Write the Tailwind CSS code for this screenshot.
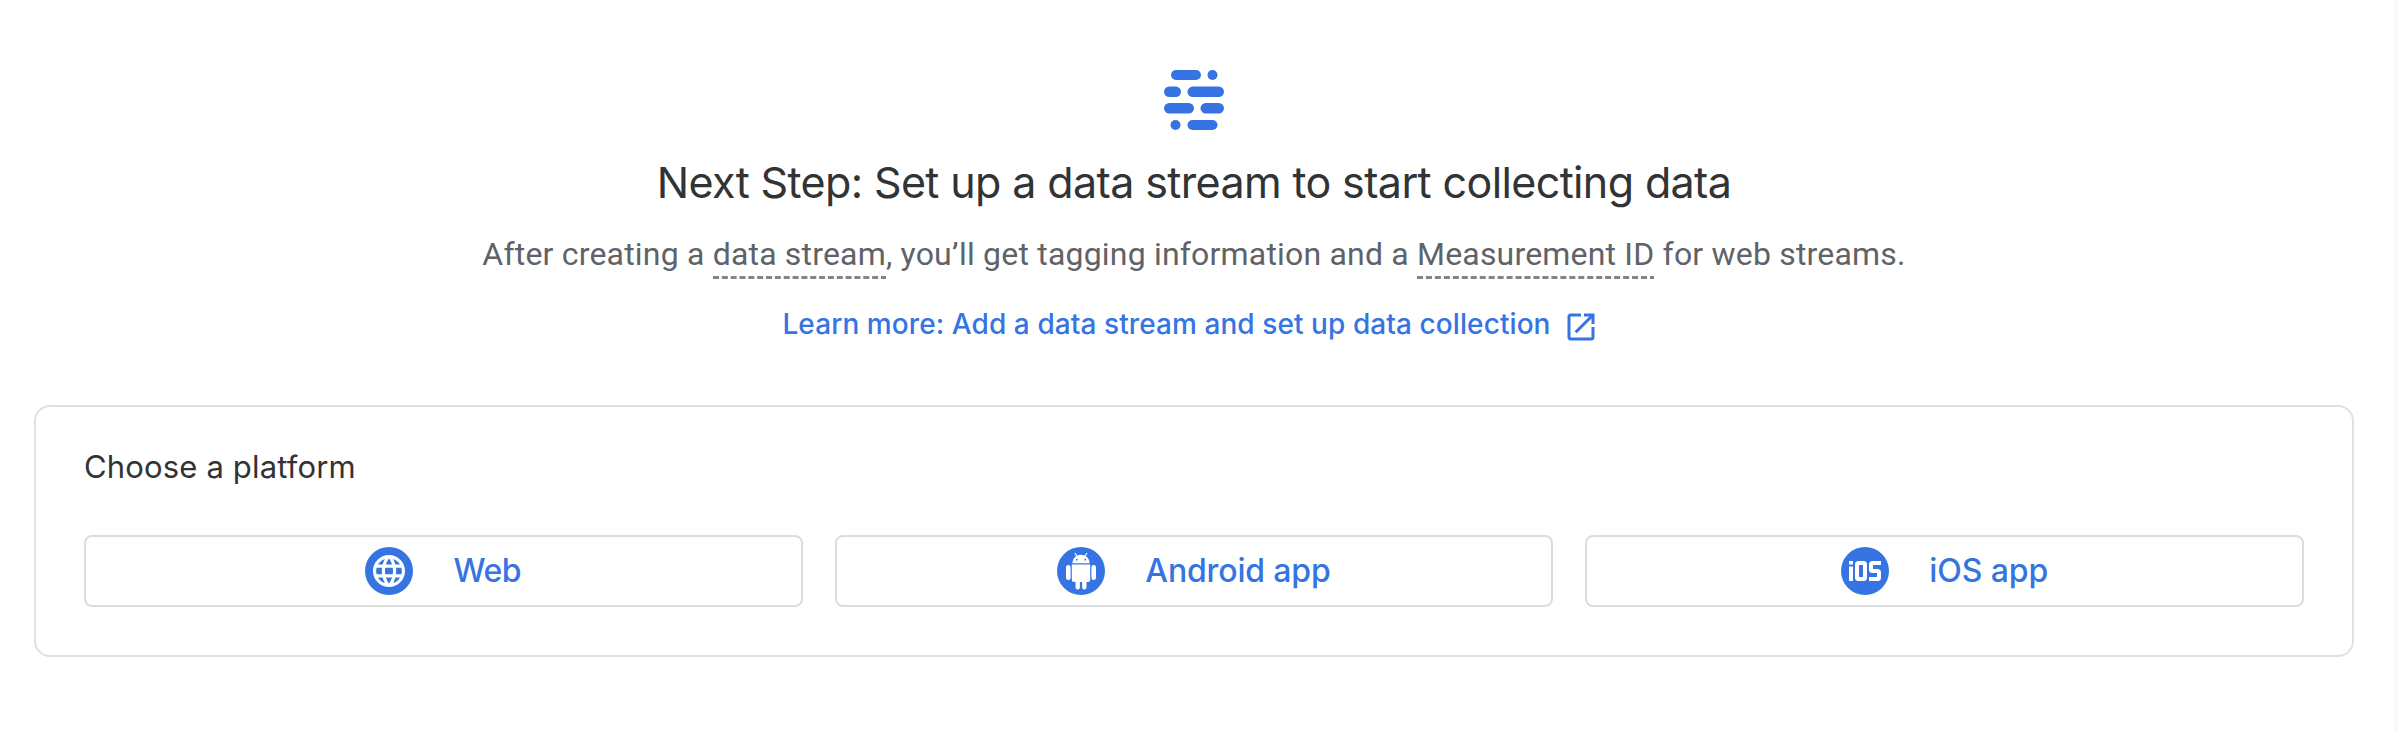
<!DOCTYPE html>
<html lang="en">
<head>
<meta charset="utf-8">
<title>Data streams</title>
<script src="https://cdn.jsdelivr.net/npm/@tailwindcss/browser@4"></script>
</head>
<body class="bg-white">
<main class="h-[732px] border-r-4 border-[#f8f9fa] pl-[34px] pr-10 pt-[70px] font-['Inter',sans-serif] text-[#323335]">
  <header class="flex flex-col items-center">
    <svg class="h-[60px] w-[60px]" viewBox="0 0 60 60" fill="#3574e2">
      <rect x="7" y="0" width="30" height="10" rx="5"/><circle cx="48.500" cy="5" r="5"/>
      <rect x="0" y="16.500" width="17" height="10.500" rx="5.250"/><rect x="23.500" y="16.500" width="36.500" height="10.500" rx="5.250"/>
      <rect x="0" y="33" width="30" height="10.500" rx="5.250"/><rect x="36.500" y="33" width="23.500" height="10.500" rx="5.250"/>
      <circle cx="11.500" cy="55" r="5"/><rect x="23.500" y="50" width="30" height="10" rx="5"/>
    </svg>
    <h1 class="mt-[24px] text-[43px] leading-[56px] tracking-[-0.62px]">Next Step: Set up a data stream to start collecting data</h1>
    <p class="mt-[20px] font-[Roboto,sans-serif] text-[32px] leading-[48px] tracking-[0.19px] text-[#5f6368]">After creating a <span class="relative inline-block">data stream<svg class="absolute left-0 top-[46px] h-[3px] w-full"><line x1="0" y1="1.500" x2="100%" y2="1.500" stroke="#80868b" stroke-width="3" stroke-dasharray="6 2.840"/></svg></span>, you’ll get tagging information and a <span class="relative inline-block">Measurement ID<svg class="absolute left-0 top-[46px] h-[3px] w-full"><line x1="0" y1="1.500" x2="100%" y2="1.500" stroke="#80868b" stroke-width="3" stroke-dasharray="6 2.960"/></svg></span> for web streams.</p>
    <a class="mr-[7px] mt-[26px] flex h-[40px] items-center gap-3 text-[28px] font-medium leading-[40px] text-[#3574e2]"><span class="tracking-[0.08px]">Learn more: Add a data stream and set up data collection</span>
      <svg class="mt-1.5 h-9 w-9" viewBox="0 0 24 24" fill="currentColor"><path d="M19 19H5V5h7V3H5c-1.110 0-2 .9-2 2v14c0 1.100.89 2 2 2h14c1.100 0 2-.9 2-2v-7h-2v7zM14 3v2h3.590l-9.830 9.830 1.410 1.410L19 6.410V10h2V3h-7z"/></svg>
    </a>
  </header>
  <section class="mt-[61px] h-[252px] rounded-2xl border-2 border-[#e0e0e0] px-12">
    <h2 class="mt-[40px] text-[31px] leading-[40px] tracking-[0.16px]">Choose a platform</h2>
    <div class="mt-[48px] grid grid-cols-3 gap-8 text-[32px] font-medium leading-[40px] text-[#3574e2]">
      <button class="flex h-[72px] items-center justify-center gap-10 rounded-lg border-2 border-[#dadce0]">
        <svg class="h-12 w-12" viewBox="0 0 48 48"><circle cx="24" cy="24" r="24" fill="#3574e2"/><path transform="translate(4.800 4.800) scale(1.600)" fill="#fff" d="M11.990 2C6.470 2 2 6.480 2 12s4.470 10 9.990 10C17.520 22 22 17.520 22 12S17.520 2 11.990 2zm6.930 6h-2.950c-.32-1.250-.78-2.450-1.380-3.560 1.840.63 3.370 1.910 4.330 3.560zM12 4.040c.83 1.200 1.480 2.530 1.910 3.960h-3.820c.43-1.430 1.080-2.760 1.910-3.960zM4.260 14C4.100 13.360 4 12.690 4 12s.1-1.360.26-2h3.380c-.08.66-.14 1.320-.14 2 0 .68.06 1.340.14 2H4.260zm.82 2h2.950c.32 1.250.78 2.450 1.380 3.560-1.840-.63-3.370-1.900-4.330-3.560zm2.950-8H5.080c.96-1.660 2.490-2.930 4.330-3.560C8.810 5.550 8.350 6.750 8.030 8zM12 19.960c-.83-1.200-1.480-2.530-1.910-3.960h3.820c-.43 1.430-1.080 2.760-1.910 3.960zM14.340 14H9.660c-.09-.66-.16-1.320-.16-2 0-.68.07-1.350.16-2h4.680c.09.65.16 1.320.16 2 0 .68-.07 1.340-.16 2zm.25 5.560c.6-1.110 1.060-2.310 1.380-3.560h2.950c-.96 1.650-2.490 2.930-4.330 3.560zM16.360 14c.08-.66.14-1.320.14-2 0-.68-.06-1.340-.14-2h3.380c.16.64.26 1.310.26 2s-.1 1.360-.26 2h-3.380z"/></svg>
        <span class="tracking-[-0.4px]">Web</span>
      </button>
      <button class="flex h-[72px] items-center justify-center gap-10 rounded-lg border-2 border-[#dadce0]">
        <svg class="h-12 w-12" viewBox="0 0 48 48"><circle cx="24" cy="24" r="24" fill="#3574e2"/><path fill="#fff" d="M14.800 17.500H33.200V33a2 2 0 0 1-2 2h-1.700v5.200a2.200 2.200 0 0 1-4.400 0V35h-2.200v5.200a2.200 2.200 0 0 1-4.400 0V35H16.800a2 2 0 0 1-2-2zM9 20.200a2.300 2.300 0 0 1 4.600 0v10.600a2.300 2.300 0 0 1-4.600 0zM34.400 20.200a2.300 2.300 0 0 1 4.600 0v10.600a2.300 2.300 0 0 1-4.600 0zM15.400 16.300c0-3.400 1.700-5.900 3.900-7.400l-1.900-2.500 .9-.6 2 2.700c2.300-1 5.100-1 7.400 0l2-2.700 .9.6-1.900 2.500c2.200 1.500 3.900 4 3.900 7.400z"/><circle cx="19.800" cy="12.700" r=".9" fill="#3574e2"/><circle cx="28.200" cy="12.700" r=".9" fill="#3574e2"/></svg>
        <span class="tracking-[-0.15px]">Android app</span>
      </button>
      <button class="flex h-[72px] items-center justify-center gap-10 rounded-lg border-2 border-[#dadce0]">
        <svg class="h-12 w-12" viewBox="0 0 48 48"><circle cx="24" cy="24" r="24" fill="#3574e2"/><g fill="none" stroke="#fff" stroke-width="4"><path d="M10 14v3.500M10 19.500V34"/><rect x="16" y="16" width="8" height="16" rx="1.500"/><path d="M40 16h-8.500a1.500 1.500 0 0 0-1.500 1.500v5a1.500 1.500 0 0 0 1.500 1.500h5a1.500 1.500 0 0 1 1.500 1.500v5a1.500 1.500 0 0 1-1.500 1.500H28"/></g></svg>
        <span class="tracking-[-0.1px]">iOS app</span>
      </button>
    </div>
  </section>
</main>
</body>
</html>
